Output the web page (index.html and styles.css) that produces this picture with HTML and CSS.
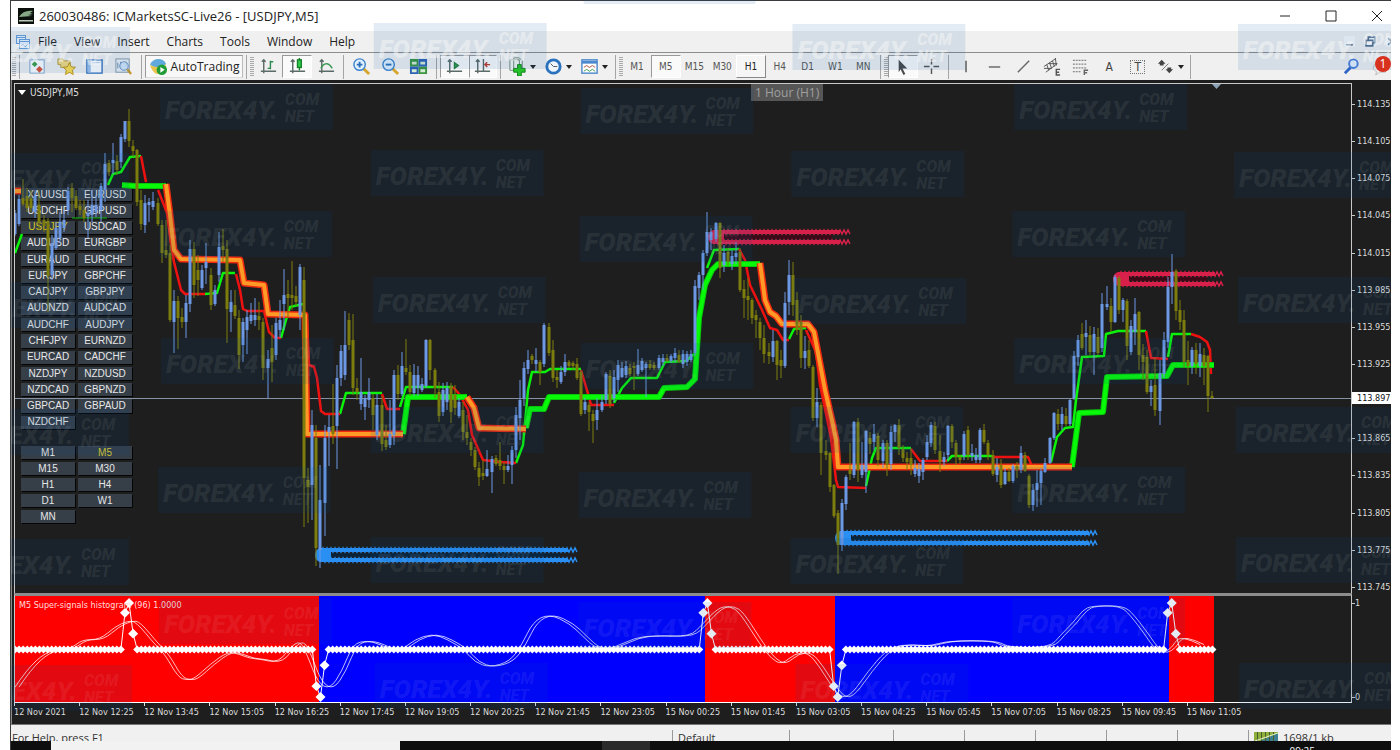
FILE: index.html
```html
<!DOCTYPE html>
<html lang="en">
<head>
<meta charset="utf-8">
<title>260030486: ICMarketsSC-Live26 - [USDJPY,M5]</title>
<link rel="stylesheet" href="styles.css">
</head>
<body>
<div class="window">
  <header class="titlebar">
    <svg class="app-icon" viewBox="0 0 16 16"><rect width="16" height="16" fill="#0b0f0b"/><path d="M1 9C4 4 9 2 15 3l-3 2 3 1-5 1 4 1z" fill="#86a886"/><path d="M1 12h14v1.500H1z" fill="#b9c8b9"/></svg>
    <h1 class="title">260030486: ICMarketsSC-Live26 - [USDJPY,M5]</h1>
    <div class="win-buttons">
      <button aria-label="Minimize"><svg viewBox="0 0 12 12"><path d="M1 6h10"/></svg></button>
      <button aria-label="Maximize"><svg viewBox="0 0 12 12"><path d="M1 1h10v10H1z"/></svg></button>
      <button aria-label="Close"><svg viewBox="0 0 12 12"><path d="M1 1l10 10M11 1L1 11"/></svg></button>
    </div>
  </header>

  <nav class="menubar">
    <svg class="mdi-icon" viewBox="0 0 16 16" fill="#eaf4ff" stroke="#6aa0dc"><rect x="1.500" y="1.500" width="9" height="8"/><rect x="4.500" y="5.500" width="10" height="9"/><path d="M1.500 3.500h9M4.500 7.500h10M6 12l2-2 2 3 3-3" fill="none"/></svg>
    <button>File</button><button>View</button><button>Insert</button><button>Charts</button><button>Tools</button><button>Window</button><button>Help</button>
    <div class="mdi-buttons">
      <button aria-label="Minimize chart"><svg viewBox="0 0 10 10"><path d="M2 8h6"/></svg></button>
      <button aria-label="Restore chart"><svg viewBox="0 0 10 10"><path d="M1 4h6v5H1zM3 4V1h6v5H7"/></svg></button>
      <button aria-label="Close chart"><svg viewBox="0 0 10 10"><path d="M2 2l6 6M8 2L2 8"/></svg></button>
    </div>
  </nav>

  <div class="toolbar">
    <i class="grip"></i><i class="sep"></i>
    <div class="group group-main">
      <button aria-label="New chart"><svg viewBox="0 0 20 20"><rect x="2" y="3" width="15" height="14" fill="#fff" stroke="#7ea6d0"/><path d="M7 4.500l3 3-3 3-3-3z" fill="#3da04a"/><path d="M12 9.500l3.500 3.500-3.500 3.500L8.500 13z" fill="#d9533a"/></svg></button>
      <button aria-label="Profiles"><svg viewBox="0 0 20 20"><path d="M1 2h5l1 2h7v7H4V8H1z" fill="#f5dc83" stroke="#b99a3a"/><path d="M13 6l2 4.300 4.500.5-3.300 3 .9 4.700-4.100-2.300-4.100 2.300.9-4.700-3.300-3 4.500-.5z" fill="#ffdf4d" stroke="#b8901e"/></svg></button>
      <button aria-label="Market watch"><svg viewBox="0 0 20 20"><rect x="2" y="3" width="16" height="14" fill="#fff" stroke="#3f78c0" stroke-width="1.500"/><path d="M3 4h3v12H3z" fill="#9cc2ee"/><path d="M8 6h8" stroke="#9cc2ee"/></svg></button>
      <button aria-label="Data window"><svg viewBox="0 0 20 20"><rect x="2" y="2" width="14" height="14" fill="#eef2f6" stroke="#8899aa"/><path d="M4 6v6M7 5v6M13 5v4" stroke="#6a89aa"/><circle cx="10.500" cy="9.500" r="4.500" fill="#cfe4fa" fill-opacity=".8" stroke="#6b93c0"/><path d="M14 13l4 5" stroke="#c99a2e" stroke-width="2.500"/></svg></button>
    </div>
    <i class="sep"></i>
    <button class="auto"><svg viewBox="0 0 20 20"><path d="M1 8c3-7 13-8 17-1l-4 4H6z" fill="#5fa9dc"/><path d="M1 8c2 3 14 4 17-1-1 7-6 11-9 11S2 13 1 8z" fill="#e9c34b"/><circle cx="13.500" cy="13.500" r="5.500" fill="#1f9c35"/><path d="M12 10.500l4.500 3-4.500 3z" fill="#fff"/></svg><span>AutoTrading</span></button>
    <i class="sep"></i><i class="grip"></i>
    <div class="group group-three">
      <button aria-label="Bar chart"><svg viewBox="0 0 20 20" fill="none" stroke="#5b6b68" stroke-width="1.500"><path d="M5 3v14M2 15h16M3 5l2-2 2 2"/><path d="M12 4v9M12 5h3M9 12h3" stroke="#2f8a50"/></svg></button>
      <button class="pressed" aria-label="Candlesticks"><svg viewBox="0 0 20 20" fill="none" stroke="#5b6b68" stroke-width="1.500"><path d="M5 3v14M2 15h16M3 5l2-2 2 2"/><path d="M12 1v13" stroke="#17812c"/><rect x="10" y="3" width="4" height="8" fill="#2fd04c" stroke="#17812c"/></svg></button>
      <button aria-label="Line chart"><svg viewBox="0 0 20 20" fill="none" stroke="#5b6b68" stroke-width="1.500"><path d="M5 3v14M2 15h16M3 5l2-2 2 2"/><path d="M4 12c3-6 8-7 12 0" stroke="#3c9a57"/></svg></button>
    </div>
    <i class="sep"></i>
    <div class="group group-three">
      <button aria-label="Zoom in"><svg viewBox="0 0 20 20"><path d="M12 12l6 6" stroke="#d6a52c" stroke-width="3"/><circle cx="8" cy="8" r="6" fill="#e2f1ff" stroke="#3d83cc" stroke-width="1.500"/><path d="M8 5v6M5 8h6" stroke="#2c6fb8" stroke-width="2"/></svg></button>
      <button aria-label="Zoom out"><svg viewBox="0 0 20 20"><path d="M12 12l6 6" stroke="#d6a52c" stroke-width="3"/><circle cx="8" cy="8" r="6" fill="#e2f1ff" stroke="#3d83cc" stroke-width="1.500"/><path d="M5 8h6" stroke="#2c6fb8" stroke-width="2"/></svg></button>
      <button aria-label="Tile windows"><svg viewBox="0 0 20 20"><path d="M1 2h9v8H1zM10 10h9v8h-9z" fill="#3b9440"/><path d="M10 2h9v8h-9zM1 10h9v8H1z" fill="#2f62b5"/><path d="M3 5h5v3H3zM12 5h5v3h-5zM3 13h5v3H3zM12 13h5v3h-5z" fill="#d8ecd5"/></svg></button>
    </div>
    <i class="sep"></i>
    <div class="group group-two">
      <button class="pressed" aria-label="Auto scroll"><svg viewBox="0 0 20 20" fill="none" stroke="#5b6b68" stroke-width="1.500"><path d="M5 3v14M2 15h16M3 5l2-2 2 2"/><path d="M10 6l4 3-4 3z" fill="#3ba652" stroke="#24803a"/></svg></button>
      <button class="pressed" aria-label="Chart shift"><svg viewBox="0 0 20 20" fill="none" stroke="#5b6b68" stroke-width="1.500"><path d="M5 3v14M2 15h16M3 5l2-2 2 2M11 2v13"/><path d="M18 8h-5M15 5.500L12.500 8l2.500 2.500" stroke="#c0392b"/></svg></button>
    </div>
    <i class="sep"></i>
    <div class="group group-menus">
      <button class="drop" aria-label="Indicators"><svg viewBox="0 0 20 20"><path d="M2 3h10v11H2zM6 1h6l3 3v10H6z" fill="#f4f8f4" stroke="#6f8678"/><path d="M10 8h4v4h4v4h-4v4h-4v-4H6v-4h4z" fill="#25c22b" stroke="#12851a"/></svg></button>
      <button class="drop" aria-label="Periods"><svg viewBox="0 0 20 20"><circle cx="10" cy="10" r="7" fill="#eef5ff" stroke="#2a71be" stroke-width="3"/><path d="M10 10h4M10 10L7 7" fill="none" stroke="#555"/></svg></button>
      <button class="drop" aria-label="Templates"><svg viewBox="0 0 20 20"><rect x="2" y="3" width="16" height="14" fill="#fff" stroke="#4c88cc" stroke-width="1.500"/><path d="M2 4h16v3H2z" fill="#4c88cc"/><path d="M4 11l3-2 3 2 3-2 3 2" fill="none" stroke="#b0503a"/><path d="M4 15l3-2 3 2 3-2 3 2" fill="none" stroke="#3b9a4a"/></svg></button>
    </div>
    <i class="sep"></i><i class="grip"></i>
    <div class="group group-periods">
      <button>M1</button><button class="pressed">M5</button><button>M15</button><button>M30</button><button class="hover">H1</button><button>H4</button><button>D1</button><button>W1</button><button>MN</button>
    </div>
    <i class="sep"></i><i class="grip"></i>
    <div class="group group-two">
      <button class="pressed" aria-label="Cursor"><svg viewBox="0 0 20 20"><path d="M6 3l9 9h-5l3 6-2 1-3-6-2 3z" fill="#4a4a4a"/></svg></button>
      <button aria-label="Crosshair"><svg viewBox="0 0 20 20" stroke="#555" stroke-width="1.500"><path d="M10 2v6M10 12v6M2 10h6M12 10h6"/></svg></button>
    </div>
    <i class="sep"></i>
    <div class="group group-lines">
      <button aria-label="Vertical line"><svg viewBox="0 0 20 20" stroke="#555" stroke-width="1.500"><path d="M9.500 4v12"/></svg></button>
      <button aria-label="Horizontal line"><svg viewBox="0 0 20 20" stroke="#666" stroke-width="1.500"><path d="M4 10.500h12"/></svg></button>
      <button aria-label="Trend line"><svg viewBox="0 0 20 20" stroke="#666" stroke-width="1.500"><path d="M4 16L16 4"/></svg></button>
      <button aria-label="Equidistant channel"><svg viewBox="0 0 20 20" fill="none" stroke="#555"><path d="M1 10L13 2M3 16L15 7M4 8l2 6M7 6l2 6M10 4l2 6M13 1l1 8M1 12h8M6 7h9"/><path d="M18 13h-4v6h4M14 16h3" stroke-width="1.500"/></svg></button>
      <button aria-label="Fibonacci"><svg viewBox="0 0 20 20" fill="none" stroke="#666"><path d="M2 3.500h15M2 7.500h15M2 11.500h15M2 15.500h9" stroke-dasharray="2 1"/><path d="M18 14h-4v5M14 16.500h3" stroke-width="1.500"/></svg></button>
      <button class="letter">A</button>
      <button class="letter boxed"><span>T</span></button>
    </div>
    <button class="drop shapes" aria-label="Arrows"><svg viewBox="0 0 20 20"><path d="M6 3l4 4-2 0v2H4V7H2z" fill="#444"/><path d="M14 17l-4-4h2v-2h4v2h2z" fill="#444"/><path d="M6 14L13 7" stroke="#777"/></svg></button>
    <i class="sep"></i>
    <div class="tool-right">
      <button aria-label="Search"><svg viewBox="0 0 20 20"><path d="M9 11l-6 6" stroke="#2f66c8" stroke-width="3"/><circle cx="12" cy="7" r="4.500" fill="#eaf2ff" stroke="#4a7fdb" stroke-width="2"/></svg></button>
      <button class="chat" aria-label="Messages"><svg viewBox="0 0 20 20"><path d="M9 6c-7 0-9 8-3 9l-1 4 4-3h6V6z" fill="#f4f4f4" stroke="#bbb"/></svg><span class="badge">1</span></button>
    </div>
  </div>

  <main class="chart">
    <section class="plot">
      <div class="symbol">USDJPY,M5</div>
      <div class="pairs" id="pairs"></div>
      <div class="frames" id="frames"></div>
      <svg class="layer" id="price" viewBox="15 84 1336 509" preserveAspectRatio="none"></svg>
      <div class="tooltip">1 Hour (H1)</div>
    </section>
    <aside class="scale">
      <span>114.135</span><span>114.105</span><span>114.075</span><span>114.045</span><span>114.015</span><span>113.985</span><span>113.955</span><span>113.925</span><span class="current">113.897</span><span>113.865</span><span>113.835</span><span>113.805</span><span>113.775</span><span>113.745</span>
    </aside>
    <section class="indicator">
      <svg class="layer" id="hist" viewBox="15 596 1336 107" preserveAspectRatio="none"></svg>
      <div class="ind-title">M5 Super-signals histogram (96) 1.0000</div>
    </section>
    <aside class="scale ind-scale"><span>1</span><span>0</span></aside>
    <div class="dates" id="dates"></div>
  </main>

  <footer class="status">
    <span class="help">For Help, press F1</span><span class="cell profile">Default</span><span class="cell wide"></span><span class="cell"></span><span class="cell"></span><span class="cell"></span><span class="cell"></span><span class="cell"></span>
    <span class="cell traffic"><svg viewBox="0 0 24 10"><path d="M0 0h24v10H0z" fill="#8fae3c"/><path d="M24 1v9H4z" fill="#3d7f93"/><path d="M3.500 0v10M7.500 0v10M11.500 0v10M15.500 0v10M19.500 0v10" stroke="#46602a"/><path d="M1 9L24 1" stroke="#e8f2d0"/></svg>1698/1 kb</span>
  </footer>
  <div class="taskbar"><i class="search-box"></i><i class="task"></i><span class="clock">09:25</span></div>
  <svg class="marks" id="marks" viewBox="10 0 1381 750" preserveAspectRatio="none"></svg>
</div>
<script src="chart.js"></script>
</body>
</html>
```
FILE: styles.css
```css
* { box-sizing: border-box; }
body { margin: 0; background: #fff; font-family: "Open Sans", "Noto Sans", sans-serif; font-size: 12px; color: #222; }
button { border: 0; padding: 0; background: none; font: inherit; color: inherit; }
h1 { margin: 0; }
.window { position: relative; display: flex; flex-direction: column; height: 100vh; margin: 0 9px 0 10px; overflow: hidden; border-left: 1px solid #3c3c3c; }

.titlebar { display: flex; align-items: center; height: 31px; padding-left: 7px; border-top: 1px solid #3b3b3f; background: #fff; flex: none; }
.app-icon { width: 16px; height: 16px; }
.title { margin-left: 5px; font-size: 13px; font-weight: 400; }
.win-buttons { display: flex; margin-left: auto; gap: 34px; padding-right: 8px; }
.win-buttons button { display: flex; }
.win-buttons svg { width: 12px; height: 12px; fill: none; stroke: #222; }

.menubar { display: flex; align-items: center; height: 22px; flex: none; padding-left: 4px; background: #f0f0f0; border-bottom: 1px solid #8d8d8d; }
.mdi-icon { width: 16px; height: 16px; margin-right: 7px; }
.menubar > button { margin-right: 17px; }
.mdi-buttons { display: flex; gap: 10px; margin-left: auto; margin-right: -6px; }
.mdi-buttons button { display: flex; background: #f7f9fc; }
.mdi-buttons svg { width: 11px; height: 11px; fill: none; stroke: #56708c; stroke-width: 1.5; }

.toolbar { display: flex; align-items: center; height: 27px; flex: none; padding-left: 1px; background: #f0f0f0; color: #555; }
.toolbar svg { width: 19px; height: 19px; flex: none; }
.toolbar button { display: flex; align-items: center; justify-content: center; height: 23px; }
.sep { width: 1px; height: 24px; margin: 0 3px; background: #a5a5a5; flex: none; }
.grip { width: 4px; height: 20px; flex: none; background: repeating-linear-gradient(#aaa 0 1px, #f0f0f0 1px 2px); }
.group { display: flex; flex: none; }
.group button { flex: 1; }
.group-main { width: 115px; }
.group-three { width: 86px; }
.group-two { width: 57px; }
.group-menus { width: 108px; }
.group-lines { width: 200px; }
.group-periods { width: 254px; font: 10px "DejaVu Sans Condensed", sans-serif; }
.toolbar .pressed { background: #fafafa; border: 1px solid; border-color: #999 #fff #fff #999; }
.toolbar .hover { background: #f6f6f6; border: 1px solid; border-color: #fff #888 #888 #fff; color: #222; }
.toolbar .auto { width: 98px; gap: 3px; background: #f8f8f8; border: 1px solid; border-color: #999 #bbb #ddd #999; font-size: 12px; color: #222; }
.toolbar .drop { justify-content: flex-start; padding-left: 4px; }
.drop::after { content: ""; margin-left: 3px; border: 3px solid transparent; border-top: 4px solid #222; border-bottom: 0; }
.shapes { width: 35px; }
.toolbar .letter { font: 12px "DejaVu Sans Condensed", sans-serif; color: #444; }
.boxed span { padding: 0 3px; border: 1px dotted #777; line-height: 12px; }
.tool-right { display: flex; gap: 8px; margin-left: auto; }
.tool-right button { width: 20px; }
.tool-right .chat { position: relative; width: 22px; }
.badge { position: absolute; z-index: 1; left: 6px; top: 1px; width: 16px; height: 16px; border-radius: 8px; background: #d8321f; color: #fff; font-size: 12px; line-height: 15px; text-align: center; }

.chart { flex: 1; min-height: 0; display: grid; grid-template-columns: minmax(0, 1fr) 39px; grid-template-rows: minmax(0, 1fr) 110px 21px; padding: 3px 0 0 2px; background: #1e1e1e; border-bottom: 1px solid #777; border-left: 1px solid #8a8a8a; font: 9px "DejaVu Sans Condensed", "DejaVu Sans", sans-serif; color: #ddd; }
.plot { position: relative; border: solid #c8c8c8; border-width: 1px 1px 0 1px; overflow: hidden; }
.layer { position: absolute; inset: 0; width: 100%; height: 100%; pointer-events: none; display: block; }
.symbol { position: absolute; left: 15px; top: 3px; font-size: 10px; line-height: 11px; }
.symbol::before { content: ""; position: absolute; left: -12px; top: 3px; border: 4px solid transparent; border-top: 5px solid #fff; border-bottom: 0; }
.pairs, .frames { position: absolute; left: 6px; display: grid; grid-template-columns: 54px 54px; gap: 3px; font: 10px "Liberation Sans", Arial, sans-serif; }
.pairs { top: 104px; height: 241px; grid-auto-rows: 1fr; }
.frames { top: 362px; grid-auto-rows: 13px; }
.pairs button, .frames button { background: #363e48; color: #e6e6e6; box-shadow: 1px 1px 0 #050505; line-height: 12px; overflow: hidden; }
.pairs .active, .frames .active { color: #d8c928; }
.tooltip { position: absolute; left: 736px; top: 0; padding: 0 4px; background: #565656; color: #a0a0a0; font: 12px/17px "Open Sans", sans-serif; }
.scale { position: relative; display: flex; flex-direction: column; justify-content: space-between; padding: 15px 0 0 5px; overflow: hidden; line-height: 12px; white-space: nowrap; }
.scale span { position: relative; }
.scale span::before { content: ""; position: absolute; left: -5px; top: 6px; width: 3px; height: 1px; background: #c8c8c8; }
.scale .current { top: -3px; margin-left: -5px; padding-left: 5px; background: #fff; color: #111; }
.indicator { position: relative; border: solid #c8c8c8; border-width: 3px 1px 1px 1px; border-top-color: #8c8c8c; border-bottom-color: #fff; }
.ind-title { position: absolute; left: 4px; top: 3px; line-height: 12px; color: #ffdcdc; }
.ind-scale { padding: 4px 0 0 3px; }
.ind-scale span::before { left: -3px; }
.dates { display: grid; grid-template-columns: repeat(19, minmax(0, 1fr)); padding: 0 100px 0 0; white-space: nowrap; line-height: 19px; }
.dates span { position: relative; }
.dates span::before { content: ""; position: absolute; left: 0; top: 0; width: 1px; height: 3px; background: #ddd; }

.status { display: flex; height: 16px; flex: none; overflow: hidden; background: #f0f0f0; padding: 5px 0 0 1px; font-size: 11px; line-height: 16px; color: #333; }
.help { flex: 1; }
.cell { width: 71px; border-left: 1px solid #999; padding-left: 5px; }
.profile { width: 117px; }
.wide { width: 104px; }
.traffic { width: 143px; display: flex; gap: 5px; }
.traffic svg { width: 24px; height: 10px; margin-top: 2px; }
.taskbar { display: flex; height: 9px; flex: none; background: #0e0e0e; overflow: hidden; padding-left: 40px; color: #fff; font-size: 10px; line-height: 14px; }
.search-box { width: 349px; background: #f2f2f2; }
.task { width: 48px; margin-left: 202px; background: #2b2b2b; }
.clock { margin: 3px 76px 0 auto; }

.marks { position: absolute; inset: 0; width: 100%; height: 100%; pointer-events: none; }
.marks rect { fill: #00509a; fill-opacity: 0.11; }
.marks text { font-family: Roboto, "Liberation Sans", sans-serif; font-weight: 900; font-style: italic; fill: #fff; fill-opacity: 0.08; }
.marks .light text { fill: #f6f6f6; fill-opacity: 0.5; }
```
FILE: chart.js
```javascript
const NS = "http://www.w3.org/2000/svg";
const STEP = 4.073;
const xAt = i => 15 + STEP * i;

function add(parent, tag, attrs, text) {
  const el = document.createElementNS(NS, tag);
  for (const k in attrs) el.setAttribute(k, attrs[k]);
  if (text) el.textContent = text;
  parent.appendChild(el);
  return el;
}

/* One bar per entry: colour, high, body top, body bottom, low */
const bars = `b 210 213 234 236;b 195 199 224 226;o 179 198 204 206;o 188 196 208 212;o 190 198 208 212;b 190 196 212 218;o 190 205 223 230;o 215 220 226 232;o 218 221 276 312;b 235 243 275 280
b 222 228 248 250;b 212 222 238 243;b 210 220 228 232;b 187 191 210 215;o 183 188 198 212;o 190 196 208 210;o 200 206 210 215;o 200 210 218 222;b 200 213 216 238;b 190 205 215 222
b 195 205 212 217;b 183 186 210 222;b 153 164 190 202;o 160 163 172 176;b 143 160 163 174;o 155 161 170 175;b 134 137 162 168;b 121 121 139 142;o 109 121 141 147;o 140 146 151 157
o 149 150 202 206;o 190 200 224 230;b 195 203 225 233;b 198 202 205 222;b 192 201 207 210;o 198 203 224 226;o 220 225 253 263;o 220 250 255 258;o 245 253 320 322;b 290 301 322 353
o 296 301 318 349;o 308 317 322 328;b 295 303 322 338;b 240 249 304 312;o 242 249 285 298;o 255 270 280 296;b 265 270 288 290;b 243 262 268 284;o 268 275 305 310;b 285 290 304 306
b 232 247 275 282;o 229 246 250 262;o 240 249 309 343;b 290 302 312 332;o 290 305 316 319;o 310 318 355 369;b 318 322 345 362;b 310 317 330 354;b 303 315 321 324;b 298 315 320 326
o 302 316 320 330;o 318 322 368 380;b 350 359 368 398;o 325 348 362 382;b 318 323 355 360;b 300 320 330 338;b 269 295 304 330;o 280 294 298 318;o 261 295 298 310;o 286 296 302 306
b 264 267 315 330;o 267 280 478 527;o 468 480 487 523;b 410 425 485 520;o 425 438 548 566;b 465 500 550 568;b 425 438 503 536;b 415 427 432 466;o 384 426 434 444;b 365 378 426 469
b 345 351 378 386;b 311 345 375 380;o 313 320 345 350;o 314 340 388 395;o 378 388 392 400;b 358 392 404 410;b 395 398 407 420;b 378 392 400 408;o 394 398 415 430;b 394 405 435 440
o 396 405 444 451;o 425 440 447 450;b 400 434 445 448;b 370 375 435 445;o 365 375 394 400;b 352 366 394 396;o 339 368 372 375;o 365 372 392 396;b 364 375 393 396;b 366 375 388 396
b 378 384 390 392;b 339 340 386 388;o 339 340 370 380;o 368 370 388 398;o 382 392 416 422;b 383 390 412 416;b 382 388 402 410;o 383 386 412 423;o 385 395 408 415;b 398 402 416 418
o 402 410 432 440;o 415 432 438 445;o 438 442 450 456;o 447 450 467 470;o 462 468 477 486;o 460 473 476 480;b 450 469 476 477;b 456 459 472 493;o 455 458 464 466;o 442 460 466 470
o 462 466 470 484;b 455 466 470 472;b 446 450 465 484;b 407 415 450 458;b 380 400 418 440;b 362 368 398 406;b 350 360 369 374;o 354 356 360 364;b 348 360 364 372;o 360 362 372 385
b 323 325 364 367;o 323 327 353 356;o 340 350 378 382;o 370 377 380 388;b 366 372 382 384;b 354 362 372 376;o 360 362 366 368;o 361 363 366 370;o 358 364 378 380;o 370 372 414 416
b 398 402 410 414;o 402 405 412 431;o 410 414 421 443;b 398 410 420 430;b 395 402 410 412;b 372 374 400 404;o 370 376 404 408;b 370 377 398 402;b 360 365 380 392;b 362 368 377 378
b 361 366 375 378;o 364 368 374 376;o 362 366 368 390;b 349 365 374 376;b 358 361 370 372;b 362 364 368 397;o 360 364 368 370;o 362 365 368 370;b 355 358 368 370;b 354 358 362 366
o 354 358 361 362;b 354 356 361 363;b 348 353 358 362;o 350 355 362 363;b 350 354 364 368;b 351 354 362 366;b 350 354 360 362;b 280 286 353 356;b 272 275 288 300;b 250 253 275 290
b 212 232 253 256;b 228 232 240 250;b 222 223 239 242;o 222 223 268 278;b 245 253 265 272;o 248 252 262 266;b 250 256 264 270;b 242 253 257 264;o 248 252 290 292;o 280 289 298 318
o 278 296 300 320;o 298 300 318 324;o 310 315 320 338;o 318 322 338 350;o 325 338 354 363;o 343 352 356 364;b 330 341 357 362;o 340 341 365 380;o 350 360 366 378;b 292 303 366 368
b 260 275 302 315;o 262 275 305 316;o 292 300 330 335;o 315 322 358 368;b 336 351 358 369;o 340 350 366 368;o 365 367 418 421;b 388 402 418 427;o 402 405 453 475;o 440 451 455 460
o 452 453 487 492;o 484 485 516 518;o 510 513 545 574;b 499 503 545 551;b 475 477 504 510;o 443 470 474 480;b 421 422 475 478;o 418 422 470 482;b 442 465 475 478;b 430 431 472 493
o 432 438 444 454;b 424 434 442 450;o 433 436 460 466;b 440 443 461 468;o 440 443 465 476;b 426 432 464 470;b 424 425 432 442;o 419 425 448 455;o 445 449 458 462;o 452 458 462 470
o 448 458 465 475;b 460 468 474 477;b 463 469 476 483;b 458 460 472 480;b 435 442 457 460;b 422 425 443 447;o 422 426 450 454;o 435 451 462 472;b 452 457 462 466;b 425 426 455 460
o 424 426 442 448;o 440 443 457 465;o 455 457 460 464;b 431 434 456 460;o 426 430 455 460;b 444 453 456 461;b 448 455 460 463;b 428 430 460 463;o 424 430 442 444;o 440 443 455 460
o 450 455 474 476;b 458 467 475 482;o 459 465 485 488;b 468 472 484 485;o 468 472 481 482;b 464 466 481 483;o 462 466 470 478;b 446 453 470 473;o 452 455 471 472;o 474 476 505 508
b 484 490 505 511;b 470 483 490 507;b 468 471 483 505;b 458 463 472 473;b 437 438 463 464;b 412 413 438 440;o 409 414 424 430;b 407 414 424 430;o 408 416 424 426;b 399 400 424 426
b 351 356 398 400;b 335 340 357 366;o 323 334 348 350;b 320 333 337 355;o 326 335 352 355;b 327 334 352 375;o 328 337 353 355;b 293 304 348 352;b 286 304 307 310;o 298 306 322 332
b 275 277 322 323;o 276 278 310 314;b 298 300 310 322;o 299 301 346 360;b 320 326 352 355;b 298 314 332 345;o 311 312 355 370;o 344 355 362 380;o 350 357 392 394;b 380 386 392 406
o 358 385 410 416;b 360 373 411 425;b 332 340 374 378;b 277 287 342 348;b 254 272 287 304;o 269 271 311 320;o 300 310 322 330;o 310 320 362 368;o 341 360 366 385;b 347 350 366 374
o 343 350 364 374;b 343 354 366 377;o 348 355 366 385;o 355 356 396 412;o 391 396 398 399`.split(/[;\n]/);

const price = document.getElementById("price");
add(price, "path", { d: "M15 398.500H1351", stroke: "#8492a6" });

function line(points, color, width) {
  add(price, "polyline", { points, fill: "none", stroke: color, "stroke-width": width, "stroke-linejoin": "round" });
}

const GREEN = "#0bf20b", RED = "#ee1111";
[
  "108,185 113,174 121,172 130,157 141,156", "15,253 22,234", "205,294 217,293 223,273 235,273",
  "281,338 286,320 290,307 303,304", "340,414 346,393 382,393", "400,407 406,387 453,387",
  "516,463 523,445 528,390 532,372 545,372 550,369 581,369", "614,403 622,388 631,378 657,378 665,362 686,361 694,354",
  "707,268 714,250 739,249", "789,339 794,329 806,328", "866,486 872,458 876,448 911,448", "947,461 952,456 992,456",
  "1051,462 1057,437 1065,428 1073,427 1076,400 1082,357 1104,356 1106,334 1118,331 1146,331", "1168,357 1172,334 1191,334"
].forEach(p => line(p, GREEN, 2.5));
line("72,218 107,218", "#0bc20b", 1);
[
  "141,156 146,182", "158,190 167,213 172,250 174,262 181,290 185,294 205,294", "236,274 240,290 243,309 247,311 264,311 269,332 275,338 281,338",
  "307,320 309,365 314,367 317,378 321,411 325,414 340,414", "382,394 387,409 400,409", "453,387 460,395 468,410 472,435 483,460 500,462 516,463",
  "581,370 589,397 591,405 614,405", "739,249 745,260 750,285 762,310 770,328 777,330 783,340 789,340",
  "806,330 816,352 820,385 831,438 836,480 838,487 866,488", "911,449 920,461 947,461", "992,457 1028,457 1032,466",
  "1146,331 1151,358 1168,359", "1191,334 1200,337 1207,342 1210,350 1211,374"
].forEach(p => line(p, RED, 2.5));

["122,185 135,186 166,186", "403,434 408,397 467,397",
  "526,428 530,409 544,409 549,397 659,397 664,388 687,387 695,379 699,318 705,285 712,270 718,264 760,264",
  "1072,467 1079,413 1103,412 1107,377 1167,376 1173,365 1214,365"
].forEach(p => { line(p, "#06c806", 6); line(p, "#08fa08", 4); });
["15,191 21,191", "166,184 170,215 174,250 181,259 240,260 244,283 264,285 268,314 305,315 307,434 403,434",
  "467,397 474,408 479,428 526,429",
  "760,263 765,300 770,312 776,316 782,324 808,324 814,332 825,390 833,425 836,440 838,467 1072,467"
].forEach(p => { line(p, "#ef2a10", 7); line(p, "#ff9a26", 4); });

/* Zigzag supply and demand bands */
[[708, 850, 232, "#d8204a", "#3c0a16"], [1113, 1225, 274, "#d8204a", "#3c0a16"], [315, 578, 550, "#2a8ff2", "#0c2236"], [835, 1099, 533, "#2a8ff2", "#0c2236"]].forEach(([x0, x1, y, color, dark]) => {
  add(price, "rect", { x: x0 + 8, y: y, width: 8, height: 10, fill: color });
  add(price, "path", { d: `M${x0 + 16} ${y + 5}H${x1 - 18}`, stroke: dark, "stroke-width": 4 });
  add(price, "ellipse", { cx: x0 + 6, cy: y + 5, rx: 6, ry: 7, fill: color });
  for (const yy of [y, y + 10]) {
    let d = `M${x0 + 6} ${yy + 2}`;
    for (let x = x0 + 6; x < x1 - 3; x += 4) d += "l2 -4l2 4";
    add(price, "path", { d, fill: "none", stroke: color, "stroke-width": 1.5 });
    add(price, "path", { d: `M${x0 + 5} ${yy}H${x1 - 10}`, stroke: color, "stroke-width": 4 });
  }
});

bars.forEach((bar, i) => {
  const [kind, hi, top, bottom, lo] = bar.trim().split(" ");
  const color = kind === "b" ? "#6d98e4" : "#7d7d0e";
  const x = Math.round(xAt(i));
  add(price, "rect", { x: x - 0.5, y: hi, width: 1, height: lo - hi, fill: color });
  add(price, "rect", { x: x - 1.5, y: top, width: 3, height: Math.max(1, bottom - top), fill: color });
});
add(price, "path", { d: "M1212 84h9l-4.500 5z", fill: "#8fa3b8" });

/* Histogram panel */
const hist = document.getElementById("hist");
[[15, 319, "#f00"], [319, 705, "#00f"], [705, 835, "#f00"], [835, 1169, "#00f"], [1169, 1214, "#f00"]]
  .forEach(([a, b, fill]) => add(hist, "rect", { x: a, y: 596, width: b - a, height: 107, fill }));

const wave = [15,688,38,653,70,650,82,640,100,640,115,627,128,621,136,622,155,645,165,655,178,678,187,681,195,679,210,665,228,652,240,655,250,659,262,660,274,663,283,658,290,648,300,641,307,655,318,684,330,690,342,672,353,644,368,641,380,645,395,652,405,648,415,640,432,634,448,640,464,650,475,663,490,668,510,662,522,645,533,622,549,614,570,624,582,636,597,650,615,648,635,638,655,636,690,637,702,625,718,608,730,606,740,613,760,645,772,660,782,665,795,654,808,653,820,668,832,688,842,699,852,695,868,672,885,652,900,645,920,646,932,646,945,642,970,641,995,642,1005,648,1050,648,1060,636,1073,623,1083,610,1092,606,1120,606,1130,615,1145,635,1155,650,1163,654,1172,648,1178,638,1190,640,1210,650];
for (const shift of [0, 4]) {
  let d = `M${wave[0] + shift} ${wave[1]}`;
  for (let k = 2; k < wave.length - 2; k += 2) {
    const x = wave[k] + shift, y = wave[k + 1];
    d += `Q${x} ${y} ${(x + wave[k + 2] + shift) / 2} ${(y + wave[k + 3]) / 2}`;
  }
  add(hist, "path", { d, fill: "none", stroke: "#fff", "stroke-opacity": 0.75 });
}
const spikes = { 27: 613, 28: 603, 29: 634, 74: 687, 75: 698, 76: 666, 169: 613, 170: 603, 171: 634, 201: 687, 202: 698, 203: 666, 283: 613, 284: 603, 285: 634 };
let signal = "";
for (let i = 0; i <= 294; i++) {
  const x = xAt(i), y = spikes[i] || 650, r = spikes[i] ? 5 : 4;
  signal += `${x},${y} `;
  add(hist, "path", { d: `M${x - r} ${y}L${x} ${y - r}L${x + r} ${y}L${x} ${y + r}Z`, fill: "#fff" });
}
add(hist, "polyline", { points: signal, fill: "none", stroke: "#fff" });

/* Buttons and date labels */
function fill(id, names, active) {
  const box = document.getElementById(id);
  names.split(" ").forEach(name => {
    const b = document.createElement("button");
    b.textContent = name;
    if (name === active) b.className = "active";
    box.appendChild(b);
  });
}
fill("pairs", "XAUUSD EURUSD USDCHF GBPUSD USDJPY USDCAD AUDUSD EURGBP EURAUD EURCHF EURJPY GBPCHF CADJPY GBPJPY AUDNZD AUDCAD AUDCHF AUDJPY CHFJPY EURNZD EURCAD CADCHF NZDJPY NZDUSD NZDCAD GBPNZD GBPCAD GBPAUD NZDCHF", "USDJPY");
fill("frames", "M1 M5 M15 M30 H1 H4 D1 W1 MN", "M5");

"12 Nov 2021,12 Nov 12:25,12 Nov 13:45,12 Nov 15:05,12 Nov 16:25,12 Nov 17:45,12 Nov 19:05,12 Nov 20:25,12 Nov 21:45,12 Nov 23:05,15 Nov 00:25,15 Nov 01:45,15 Nov 03:05,15 Nov 04:25,15 Nov 05:45,15 Nov 07:05,15 Nov 08:25,15 Nov 09:45,15 Nov 11:05".split(",").forEach(t => {
  const s = document.createElement("span");
  s.textContent = t;
  document.getElementById("dates").appendChild(s);
});

/* Site watermark grid */
const marks = document.getElementById("marks");
[[-44,27],[373,23],[792,24],[1238,24],[159,84],[580,88],[1014,84],[-45,153],[370,150],[791,151],[1234,152],[158,211],[579,216],[1012,211],[-42,282],[372,277],[793,278],[1238,277],[160,338],[580,343],[1014,338],[-45,409],[370,407],[790,407],[1236,407],[157,467],[578,472],[1012,467],[-45,539],[370,537],[790,538],[1236,537],[158,598],[578,602],[1012,598],[-42,665],[374,663],[795,664],[1239,663]].forEach(([x, y]) => {
  const g = add(marks, "g", y < 50 ? { class: "light" } : {});
  add(g, "rect", { x, y, width: 173, height: 46 });
  add(g, "text", { x: x + 5, y: y + 35, "font-size": 26 }, "FOREX4Y.");
  add(g, "text", { x: x + 125, y: y + 21, "font-size": 16 }, "COM");
  add(g, "text", { x: x + 125, y: y + 38, "font-size": 16 }, "NET");
});
add(marks, "rect", { x: 583, y: 0, width: 172, height: 4 });
```
